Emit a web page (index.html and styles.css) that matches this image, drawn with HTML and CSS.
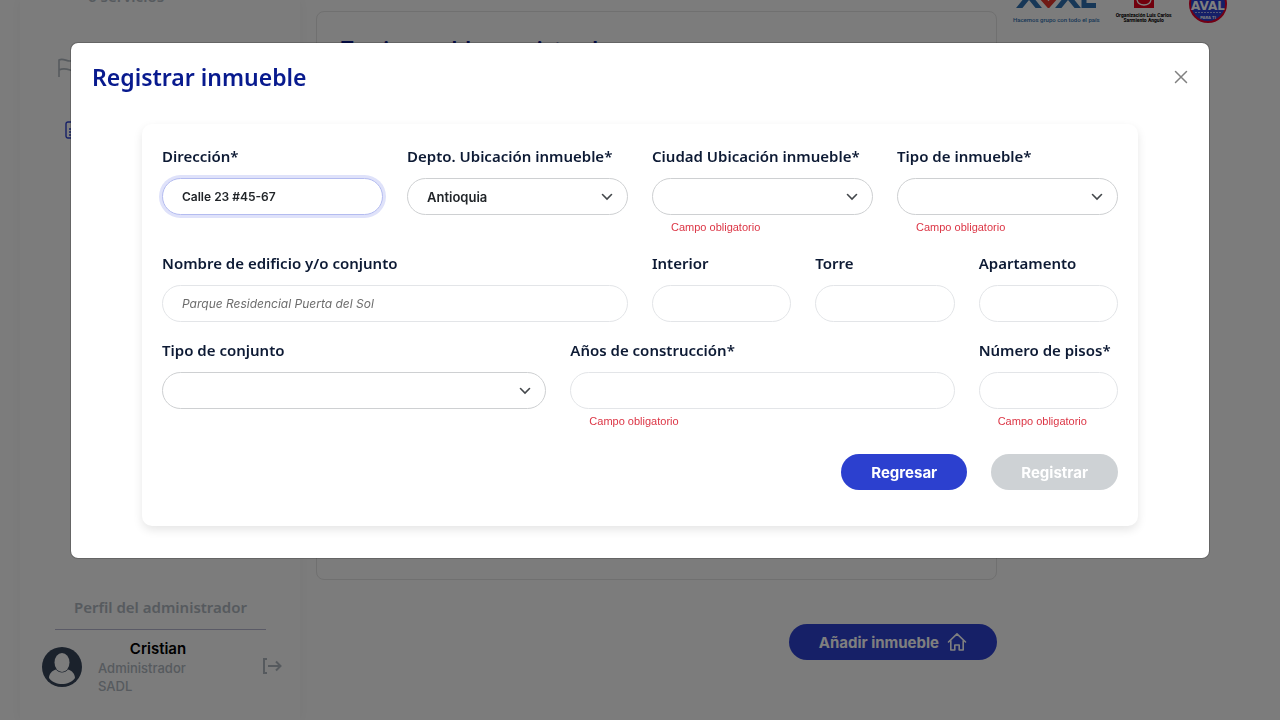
FILE: index.html
```html
<!DOCTYPE html>
<html lang="es">
<head>
<meta charset="utf-8">
<meta name="viewport" content="width=device-width, initial-scale=1">
<title>Registrar inmueble</title>
<link rel="stylesheet" href="styles.css">
</head>
<body>
<div class="page">
  <aside class="sidebar">
    <nav class="side-nav">
      <span class="side-count">6 servicios</span>
      <svg class="side-flag" width="24" height="20" viewBox="0 0 24 20" fill="none" stroke="currentColor" stroke-width="1.6"><path d="M2 19V2c4-2 7 1 11 1s6-1 10-2v11c-5 2-7 1-10 0s-7-2-11 0"/></svg>
      <svg class="side-doc" width="18" height="18" viewBox="0 0 18 18" fill="none" stroke="currentColor" stroke-width="1.4"><rect x="1" y="1" width="15" height="16" rx="2"/><path d="M4 8h9M4 11h9M4 14h9"/></svg>
    </nav>
    <section class="profile">
      <h2 class="profile-title">Perfil del administrador</h2>
      <div class="profile-row">
        <svg class="avatar" width="40" height="40" viewBox="0 0 40 40"><circle cx="20" cy="20" r="20" fill="#364459"/><ellipse cx="20" cy="15.500" rx="7.500" ry="9.500" fill="#f8f8f8"/><path d="M7 31c0-4 3-7.500 7-8.500 3 4 9 4 12 0 4 1 7 4.500 7 8.500-3 4-8 6-13 6s-10-2-13-6z" fill="#f8f8f8"/></svg>
        <div class="profile-data">
          <strong class="profile-name">Cristian</strong>
          <span>Administrador</span>
          <span>SADL</span>
        </div>
        <button class="logout" type="button" aria-label="Cerrar sesión"><svg width="20" height="18" viewBox="0 0 20 18" fill="none" stroke="currentColor" stroke-width="2"><path d="M5 2H2v14h3M6 9h12M14 4.500 18.500 9 14 13.500"/></svg></button>
      </div>
    </section>
  </aside>
  <main class="main">
    <section class="panel"><h1 class="panel-title">Tus inmuebles registrados</h1></section>
    <button class="btn btn-add" type="button">Añadir inmueble <svg width="20" height="20" viewBox="0 0 20 20" fill="none" stroke="currentColor" stroke-width="1.600" stroke-linejoin="round" stroke-linecap="round"><path d="M1.500 10 10 1.800 18.500 10M3.800 8.500V18h4v-5h4.400v5h4V8.500"/></svg></button>
  </main>
  <div class="brands">
    <figure class="brand brand-aval">
      <svg width="84" height="8" viewBox="0 0 84 8" fill="none" stroke-width="5"><path d="M4 9.500 15-4 26 9.500M43 9.500 54-4 65 9.500" stroke="#2f6fae"/><path d="M26.500-4 34.500 5 42.500-4" stroke="#e0352b"/><path d="M70-3V5.500H82" stroke="#2f6fae"/></svg>
      <figcaption>Hacemos grupo con todo el país</figcaption>
    </figure>
    <figure class="brand brand-org">
      <svg width="20" height="8" viewBox="0 0 20 8"><path d="M0 0h20v8H0z" fill="#e3001b"/><path d="M3 0a7.200 6.500 0 0 0 14 0" fill="none" stroke="#fff" stroke-width="1.300"/></svg>
      <figcaption>Organización Luis Carlos<br>Sarmiento Angulo</figcaption>
    </figure>
    <svg class="brand-seal" width="40" height="24" viewBox="0 0 40 24"><circle cx="20" cy="4" r="18" fill="#2b3fd0" stroke="#e3002b" stroke-width="2"/><text x="20" y="10" class="seal-name">AVAL</text><path d="M7 12.500h26" stroke="#aab2ee" stroke-dasharray="2 1"/><text x="20" y="19" class="seal-note">PARA TI</text></svg>
  </div>
</div>

<div class="overlay">
  <div class="modal" role="dialog" aria-modal="true" aria-labelledby="modal-title">
    <header class="modal-head">
      <h2 class="modal-title" id="modal-title">Registrar inmueble</h2>
      <button class="close" type="button" aria-label="Cerrar"><svg width="14" height="14" viewBox="0 0 14 14" stroke="currentColor" stroke-width="1.500" stroke-linecap="round"><path d="M1.500 1.500l11 11M12.500 1.500l-11 11"/></svg></button>
    </header>
    <form class="card">
      <div class="field span-3">
        <label for="direccion">Dirección*</label>
        <input class="control is-focused" id="direccion" type="text" value="Calle 23 #45-67">
      </div>
      <div class="field span-3">
        <label for="depto">Depto. Ubicación inmueble*</label>
        <div class="select"><select class="control" id="depto"><option>Antioquia</option></select><svg class="chevron" viewBox="0 0 12 8"><path d="M1.500 1.500 6 6l4.500-4.500"/></svg></div>
      </div>
      <div class="field span-3">
        <label for="ciudad">Ciudad Ubicación inmueble*</label>
        <div class="select"><select class="control" id="ciudad"><option></option></select><svg class="chevron" viewBox="0 0 12 8"><path d="M1.500 1.500 6 6l4.500-4.500"/></svg></div>
        <p class="error">Campo obligatorio</p>
      </div>
      <div class="field span-3">
        <label for="tipo">Tipo de inmueble*</label>
        <div class="select"><select class="control" id="tipo"><option></option></select><svg class="chevron" viewBox="0 0 12 8"><path d="M1.500 1.500 6 6l4.500-4.500"/></svg></div>
        <p class="error">Campo obligatorio</p>
      </div>
      <div class="field span-6">
        <label for="nombre">Nombre de edificio y/o conjunto</label>
        <input class="control" id="nombre" type="text" placeholder="Parque Residencial Puerta del Sol">
      </div>
      <div class="field span-2">
        <label for="interior">Interior</label>
        <input class="control" id="interior" type="text">
      </div>
      <div class="field span-2">
        <label for="torre">Torre</label>
        <input class="control" id="torre" type="text">
      </div>
      <div class="field span-2">
        <label for="apto">Apartamento</label>
        <input class="control" id="apto" type="text">
      </div>
      <div class="field span-5">
        <label for="conjunto">Tipo de conjunto</label>
        <div class="select"><select class="control" id="conjunto"><option></option></select><svg class="chevron" viewBox="0 0 12 8"><path d="M1.500 1.500 6 6l4.500-4.500"/></svg></div>
      </div>
      <div class="field span-5">
        <label for="anos">Años de construcción*</label>
        <input class="control" id="anos" type="text">
        <p class="error">Campo obligatorio</p>
      </div>
      <div class="field span-2">
        <label for="pisos">Número de pisos*</label>
        <input class="control" id="pisos" type="text">
        <p class="error">Campo obligatorio</p>
      </div>
      <div class="actions">
        <button class="btn" type="button">Regresar</button>
        <button class="btn" type="submit" disabled>Registrar</button>
      </div>
    </form>
  </div>
</div>
</body>
</html>
```
FILE: styles.css
```css
* { box-sizing: border-box; }

:root {
  --heading: "Noto Sans", "Open Sans", sans-serif;
  --text: Inter, Roboto, sans-serif;
  --blue: #2c40cf;
  --navy: #081a8e;
}

body {
  margin: 0;
  background: #f8f8f8;
  font-family: var(--text);
}

h1, h2, p, figure { margin: 0; }
button { font-family: inherit; cursor: pointer; }

.page {
  display: flex;
  gap: 16px;
  height: 100vh;
  padding-left: 20px;
  overflow: hidden;
}

/* Sidebar */
.sidebar {
  display: flex;
  flex-direction: column;
  justify-content: space-between;
  width: 280px;
  flex-shrink: 0;
  color: #adb5bd;
  box-shadow: 0 0 10px rgba(0, 0, 0, 0.04);
}

.side-nav {
  display: flex;
  flex-direction: column;
  padding-left: 37px;
}

.side-count {
  margin: -14px 0 0 31px;
  font: 600 15px/20px var(--heading);
}

.side-flag { margin-top: 52px; }
.side-doc { margin: 43px 0 0 8px; color: var(--blue); }

.profile { padding: 0 18px 25px 22px; }

.profile-title {
  margin: 0 16px 0 13px;
  padding-bottom: 10px;
  border-bottom: 1px solid #b4b4cc;
  font: 600 15px/24px var(--heading);
  text-align: center;
}

.profile-row {
  display: flex;
  align-items: center;
  gap: 16px;
  padding-top: 9px;
}

.profile-data {
  display: flex;
  flex-direction: column;
  flex: 1;
  font-size: 13px;
  font-weight: 500;
  line-height: 18px;
}

.profile-name {
  width: 120px;
  font-size: 15px;
  font-weight: 600;
  line-height: 20px;
  color: #000;
  text-align: center;
}

.logout {
  padding: 0;
  border: 0;
  background: none;
  color: inherit;
}

/* Main column */
.main {
  display: flex;
  flex: 1;
  flex-direction: column;
  align-items: flex-end;
  gap: 44px;
  padding: 11px 0 60px;
}

.panel {
  flex: 1;
  width: 100%;
  padding: 18px 24px;
  border: 1px solid #e0e0e0;
  border-radius: 8px;
}

.panel-title {
  color: var(--navy);
  font: 600 22px/36px var(--heading);
}

.btn {
  display: inline-flex;
  align-items: center;
  gap: 8px;
  height: 36px;
  padding: 0 30px;
  border: 0;
  border-radius: 18px;
  background: var(--blue);
  color: #fff;
  font-size: 15px;
  font-weight: 700;
}

.btn:disabled { background: #ced2d5; }

/* Brand logos */
.brands {
  display: flex;
  align-items: flex-start;
  gap: 16px;
  width: 267px;
  flex-shrink: 0;
}

.brand {
  display: flex;
  flex-direction: column;
  align-items: center;
  white-space: nowrap;
}

.brand-aval { color: #2f6fae; font: 500 6px/8px Roboto, sans-serif; gap: 8px; }
.brand-org { color: #000; font: 700 5px/5px Roboto, sans-serif; gap: 5px; text-align: center; }
.seal-name { fill: #fff; font: 700 12px "DejaVu Sans", sans-serif; text-anchor: middle; }
.seal-note { fill: #fff; font: 700 4px Inter, sans-serif; text-anchor: middle; }

/* Modal */
.overlay {
  position: fixed;
  inset: 0;
  padding: 42px 24px;
  overflow: auto;
  background: rgba(0, 0, 0, 0.5);
}

.modal {
  max-width: 1140px;
  margin: 0 auto;
  padding: 16px 71px 32px;
  border: 1px solid rgba(0, 0, 0, 0.18);
  border-radius: 8px;
  background: #fff;
  background-clip: padding-box;
}

.modal-head {
  display: flex;
  align-items: center;
  justify-content: space-between;
  margin: 0 -50px 29px;
}

.modal-title {
  color: var(--navy);
  font: 600 23px/36px var(--heading);
}

.close {
  display: flex;
  padding: 0;
  border: 0;
  background: none;
  color: #808080;
}

.card {
  display: grid;
  grid-template-columns: repeat(12, minmax(0, 1fr));
  gap: 16px 24px;
  padding: 20px 20px 36px;
  border-radius: 10px;
  box-shadow: 0 4px 10px rgba(0, 0, 0, 0.1);
}

.span-2 { grid-column: span 2; }
.span-3 { grid-column: span 3; }
.span-5 { grid-column: span 5; }
.span-6 { grid-column: span 6; }

.field label {
  display: block;
  margin-bottom: 10px;
  color: #0d1a34;
  font: 600 15px/24px var(--heading);
  white-space: nowrap;
}

.control {
  display: block;
  width: 100%;
  height: 37px;
  padding: 0 19px;
  border: 1px solid #e3e5e8;
  border-radius: 19px;
  outline: 0;
  background: #fff;
  color: #212529;
  font: 600 12px var(--text);
}

.control::placeholder {
  color: #6c6c6c;
  font-weight: 400;
  font-style: italic;
}

.is-focused {
  border-color: #b4bcf0;
  box-shadow: 0 0 0 3px #dfe2fa;
}

.select { display: grid; align-items: center; }
.select > * { grid-area: 1 / 1; }
.select .control {
  border-color: #ced0d2;
  font-size: 13px;
  appearance: none;
}

.chevron {
  width: 12px;
  height: 8px;
  margin-right: 15px;
  justify-self: end;
  fill: none;
  stroke: #43474b;
  stroke-width: 1.6;
  stroke-linecap: round;
  pointer-events: none;
}

.error {
  margin: 4px 0 0 19px;
  color: #dc3545;
  font: 11px/16px "Liberation Sans", Arial, sans-serif;
}

.actions {
  display: flex;
  grid-column: 1 / -1;
  justify-content: flex-end;
  gap: 24px;
  margin-top: 9px;
}
```
